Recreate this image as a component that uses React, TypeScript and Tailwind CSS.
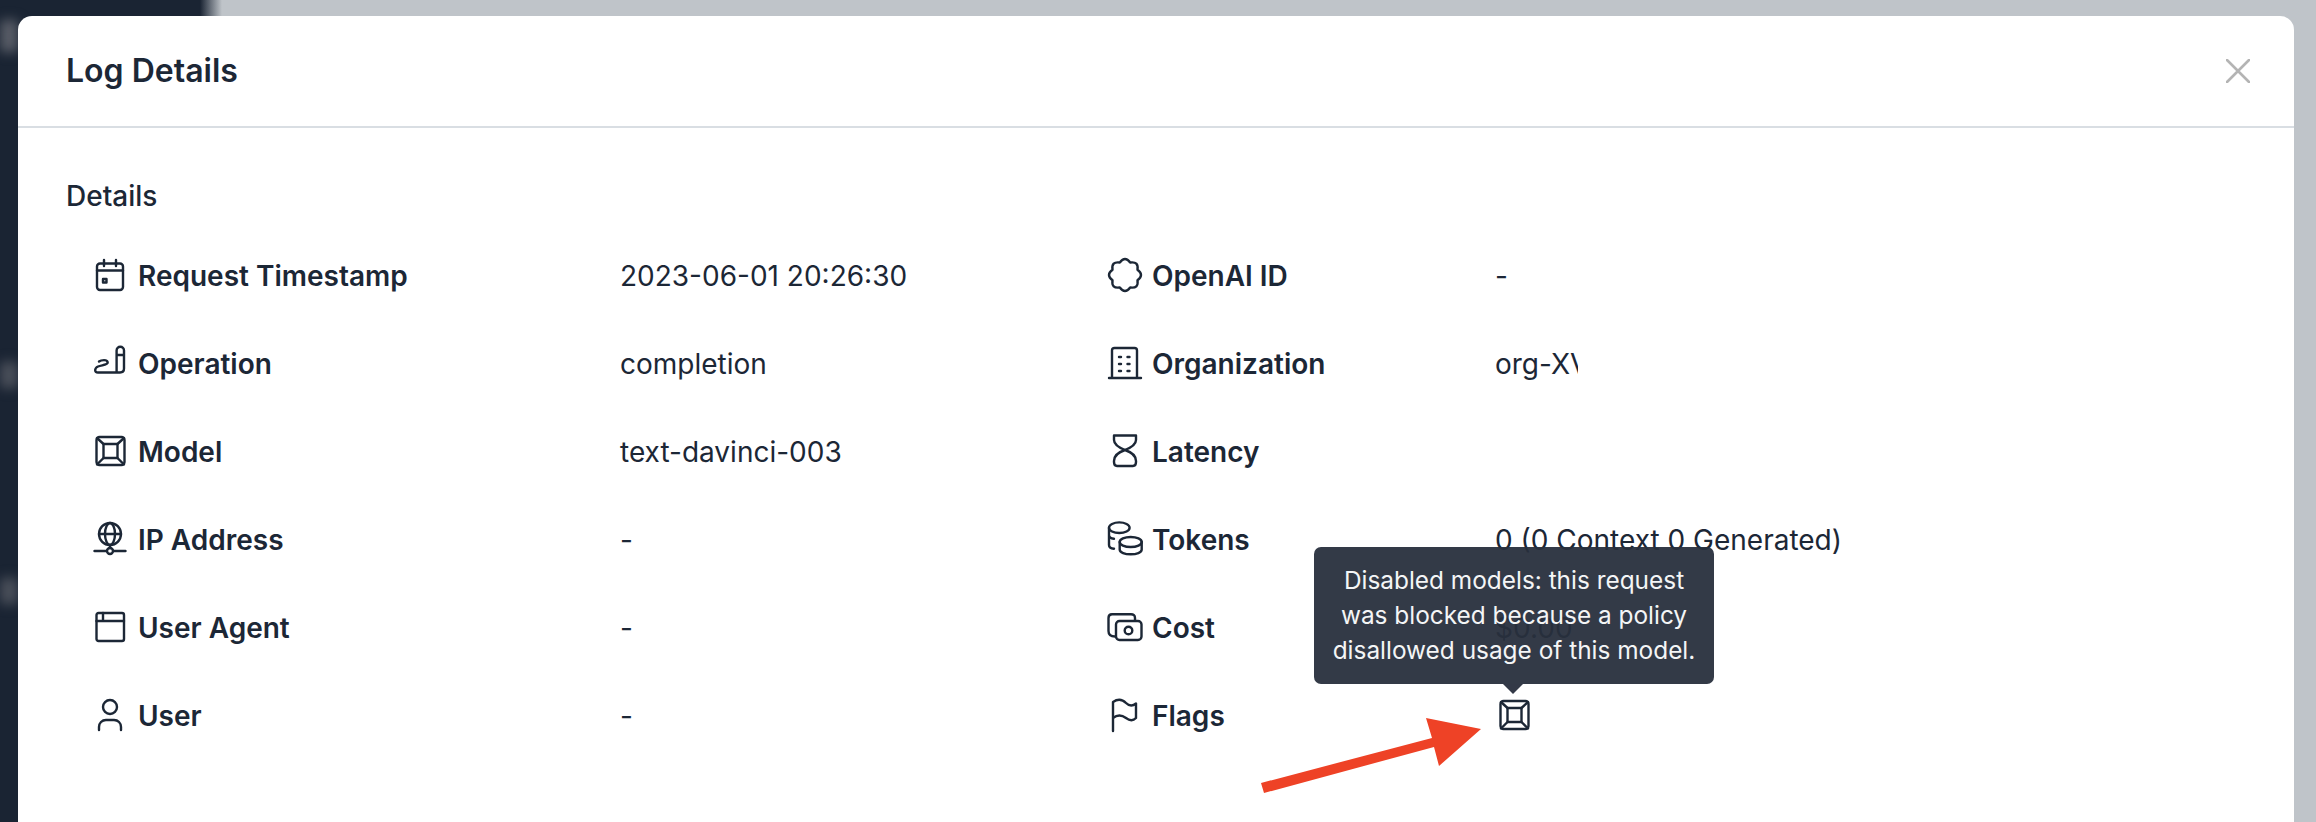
import React from "react";

type IconProps = { children: React.ReactNode };
const Ico = ({ children }: IconProps) => (
  <svg width="32" height="32" viewBox="0 0 32 32" fill="none" stroke="#1c2736" strokeWidth="2.4" strokeLinecap="round" strokeLinejoin="round" className="shrink-0 -translate-y-px overflow-visible">
    {children}
  </svg>
);

const Calendar = () => (
  <Ico>
    <rect x="3" y="4.5" width="26" height="26.5" rx="3" />
    <path d="M3 11.5H29M10 1V7M22 1V7" />
    <rect x="9" y="20" width="3.5" height="3.5" />
  </Ico>
);
const Signature = () => (
  <Ico>
    <path d="M5 14.5C7 13 13.5 12 13.7 15.5C13.8 18 7.5 18 4 19.5C0.5 21 0 25.5 4 25.5H26C28.5 25.5 30 24 30 21.5V3.5A3.7 3.7 0 0 0 22.6 3.5V25.5M22.6 8H30" />
  </Ico>
);
const ModelIcon = () => (
  <Ico>
    <rect x="2.5" y="2" width="28" height="28" rx="3" />
    <rect x="9.5" y="9" width="14" height="14" />
    <path d="M3 3L9.5 9M30 3L23.5 9M3 29.5L9.5 23M30 29.5L23.5 23" />
  </Ico>
);
const IpIcon = () => (
  <Ico>
    <circle cx="16" cy="11" r="11" />
    <ellipse cx="16" cy="11" rx="5" ry="11" />
    <path d="M5 11H27M0.5 28H12.5M19.5 28H31.5M16 22V25" />
    <circle cx="16" cy="28" r="3" />
  </Ico>
);
const WindowIcon = () => (
  <Ico>
    <rect x="2.5" y="2" width="27.5" height="28" rx="2" />
    <path d="M2.5 10H30M9 2V10" />
  </Ico>
);
const UserIcon = () => (
  <Ico>
    <circle cx="16" cy="8" r="7" />
    <path d="M5 31V28C5 24 8 21 12 21H20C24 21 27 24 27 28V31" />
  </Ico>
);
const scallop = () => {
  const n = 8;
  const pts: string[] = [];
  for (let i = 0; i < n; i++) {
    const a0 = (i / n) * Math.PI * 2 - Math.PI / 2 + Math.PI / 8;
    const a1 = ((i + 0.5) / n) * Math.PI * 2 - Math.PI / 2 + Math.PI / 8;
    const a2 = ((i + 1) / n) * Math.PI * 2 - Math.PI / 2 + Math.PI / 8;
    const r0 = 13.5;
    const r1 = 19.5;
    if (i === 0) pts.push(`M${(17 + r0 * Math.cos(a0)).toFixed(1)} ${(16 + r0 * Math.sin(a0)).toFixed(1)}`);
    pts.push(`Q${(17 + r1 * Math.cos(a1)).toFixed(1)} ${(16 + r1 * Math.sin(a1)).toFixed(1)} ${(17 + r0 * Math.cos(a2)).toFixed(1)} ${(16 + r0 * Math.sin(a2)).toFixed(1)}`);
  }
  return pts.join(" ") + "Z";
};
const BadgeIcon = () => (
  <Ico>
    <path d={scallop()} />
  </Ico>
);
const BuildingIcon = () => (
  <Ico>
    <path d="M1 31H33M4 31V3.5C4 2 5 1 6.5 1H26.5C28 1 29 2 29 3.5V31" />
    <path d="M11 10H13M19.5 10H21.5M11 17H13M19.5 17H21.5M11 24H13M19.5 24H21.5" />
  </Ico>
);
const HourglassIcon = () => (
  <Ico>
    <path d="M6 0.5H28V5C28 10 22 13 17 15C12 13 6 10 6 5Z" />
    <path d="M17 15C23 17 28 20 28 26V27C28 30 27 31 25 31H9C7 31 6 30 6 27V26C6 20 11 17 17 15Z" />
  </Ico>
);
const CoinsIcon = () => (
  <Ico>
    <ellipse cx="11.3" cy="4.7" rx="10.3" ry="5.3" />
    <ellipse cx="22.7" cy="19" rx="11" ry="5" />
    <path d="M11.7 19V26.5C11.7 29.5 17 31.3 22.7 31.3C28.5 31.3 33.7 29.5 33.7 26.5V19M1 4.7V22C1 24 3 25.5 6 25.7M1 12C1 14 3 15.5 6 15.8" />
  </Ico>
);
const MoneyIcon = () => (
  <Ico>
    <path d="M27 9V7C27 4.5 25.5 3.3 23 3.3H4C1.5 3.3 0.5 5 0.5 7V20C0.5 23 2 25.5 7 25.5" />
    <rect x="8" y="10" width="25.5" height="19" rx="3.5" />
    <circle cx="20.5" cy="19.5" r="3.8" />
  </Ico>
);
const FlagIcon = () => (
  <Ico>
    <path d="M5 32V3C11 -1 15 1 18 4C22 8 25 7 28 4.5V19C25 22 22 22 18 19C14 16 10 15 5 19" />
  </Ico>
);

type Cell = { icon: React.ReactNode; label: string; value?: React.ReactNode };
const rows: [Cell, Cell][] = [
  [
    { icon: <Calendar />, label: "Request Timestamp", value: "2023-06-01 20:26:30" },
    { icon: <BadgeIcon />, label: "OpenAI ID", value: "-" },
  ],
  [
    { icon: <Signature />, label: "Operation", value: "completion" },
    { icon: <BuildingIcon />, label: "Organization", value: <span className="block w-[83px] overflow-hidden whitespace-nowrap">org-XVkLm2aQ</span> },
  ],
  [
    { icon: <ModelIcon />, label: "Model", value: "text-davinci-003" },
    { icon: <HourglassIcon />, label: "Latency" },
  ],
  [
    { icon: <IpIcon />, label: "IP Address", value: "-" },
    { icon: <CoinsIcon />, label: "Tokens", value: "0 (0 Context 0 Generated)" },
  ],
  [
    { icon: <WindowIcon />, label: "User Agent", value: "-" },
    { icon: <MoneyIcon />, label: "Cost", value: "$0.00" },
  ],
  [
    { icon: <UserIcon />, label: "User", value: "-" },
    { icon: <FlagIcon />, label: "Flags", value: <span className="block ml-[3px]"><ModelIcon /></span> },
  ],
];

const Label = ({ icon, label }: Cell) => (
  <div className="flex items-center gap-[12px]">
    {icon}
    <span className="font-semibold">{label}</span>
  </div>
);

export default function App() {
  return (
    <div className="relative h-[822px] w-full overflow-hidden bg-[linear-gradient(to_right,#1a2433_200px,#bfc4c9_222px)] pt-4 pl-[18px] font-['Inter',sans-serif] text-[#1c2736]">
      <div className="absolute left-0 top-[20px] h-[32px] w-[18px] bg-[#5a5e68] blur-[6px]" />
      <div className="absolute left-0 top-[362px] h-[26px] w-[18px] bg-[#4b505b] blur-[6px]" />
      <div className="absolute left-0 top-[578px] h-[26px] w-[18px] bg-[#4b505b] blur-[6px]" />

      <div className="relative h-[806px] w-[2276px] rounded-t-[14px] bg-white">
        <header className="flex h-[112px] items-center justify-between border-b-2 border-[#d9dee3] pl-[48px] pr-[44px]">
          <h1 className="text-[32px] font-semibold">Log Details</h1>
          <svg width="24" height="24" viewBox="0 0 24 24" fill="none" stroke="#b4b4b4" strokeWidth="2.6" strokeLinecap="round">
            <path d="M1 1L23 23M23 1L1 23" />
          </svg>
        </header>
        <section className="pl-[48px] pt-[52px]">
          <h2 className="text-[28px] leading-[32px] font-medium">Details</h2>
          <div className="mt-[20px] pl-[28px] text-[28px]">
            {rows.map(([a, b]) => (
              <div key={a.label} className="flex h-[88px] items-center">
                <div className="w-[526px]"><Label {...a} /></div>
                <div className="w-[488px]">{a.value}</div>
                <div className="w-[387px]"><Label {...b} /></div>
                <div>{b.value}</div>
              </div>
            ))}
          </div>
        </section>
      </div>

      <div className="absolute left-[1314px] top-[547px] w-[400px] rounded-[7px] bg-[#282f3d]/95 px-[16px] py-[16px] text-center text-[24.4px] leading-[35px] text-[#f4f5f6]">
        Disabled models: this request was blocked because a policy disallowed usage of this model.
        <div className="absolute left-[189px] top-full h-0 w-0 border-x-[10px] border-t-[10px] border-x-transparent border-t-[#333947]" />
      </div>

      <svg className="absolute left-0 top-0" width="2316" height="822" fill="#ee4226">
        <polygon points="1261,783 1264,793 1434,747 1439,766 1481,729 1426,718 1432,738" />
      </svg>
    </div>
  );
}
